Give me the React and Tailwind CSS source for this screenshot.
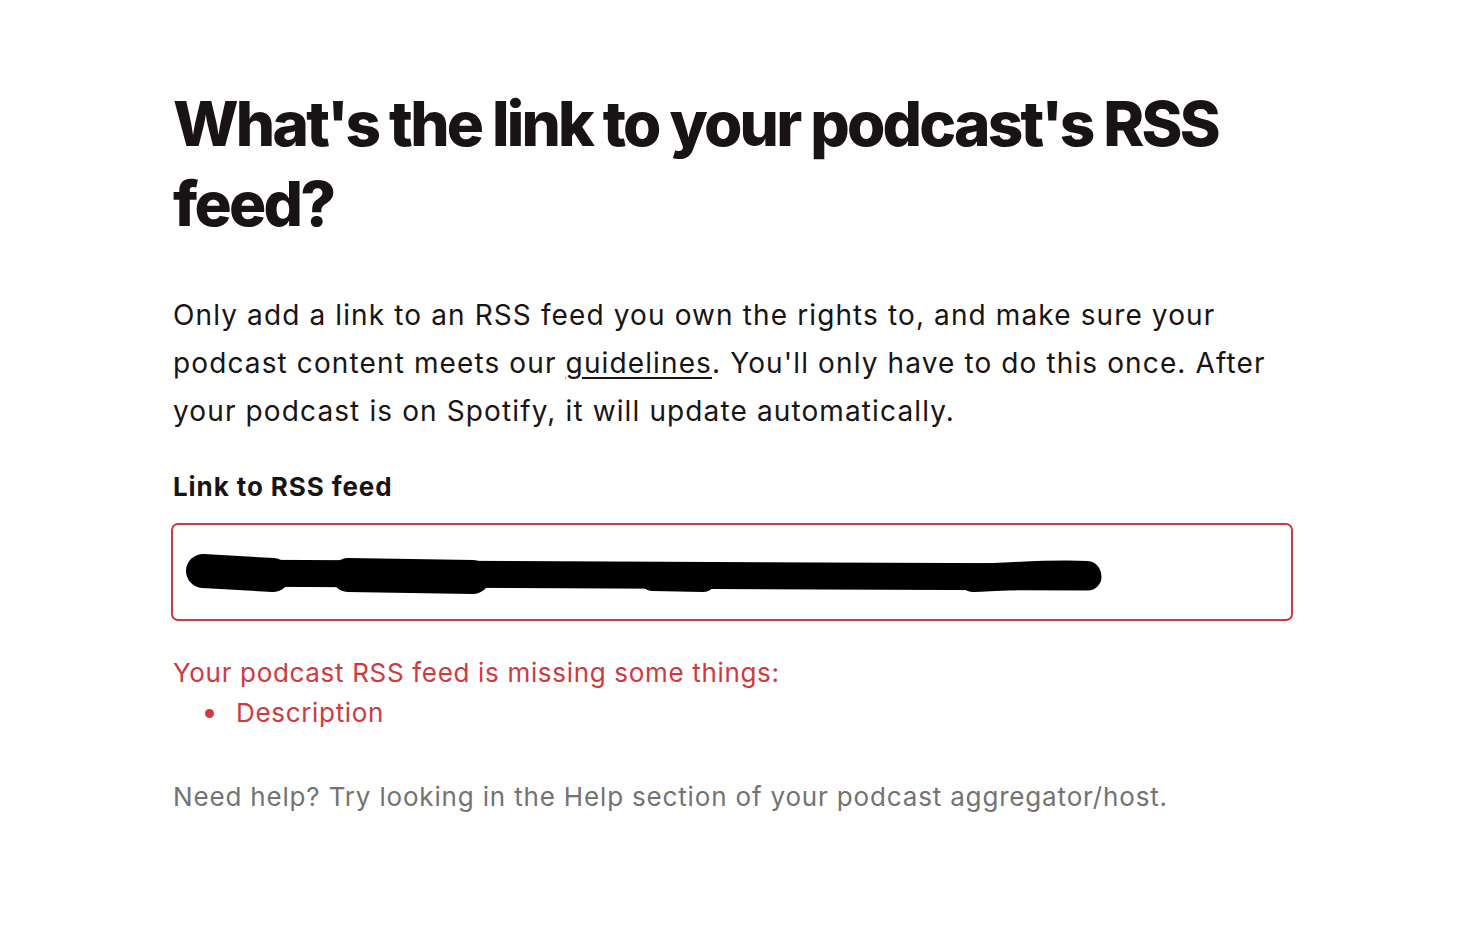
import React from "react";

function Redaction() {
  return (
    <svg
      className="absolute left-0 top-0"
      width="1122"
      height="97"
      viewBox="0 0 1122 97"
      fill="none"
    >
      <g stroke="#000" strokeLinecap="round" strokeLinejoin="round">
        <path d="M30 48 C 200 49, 600 51, 915 52" strokeWidth="27" />
        <path d="M30 46 L 100 50" strokeWidth="34" />
        <path d="M175 50 L 300 52" strokeWidth="34" />
        <path d="M480 52 L 530 53" strokeWidth="28" />
        <path d="M800 53 C 850 51, 880 48, 914 50" strokeWidth="28" />
      </g>
    </svg>
  );
}

function App() {
  return (
    <div className="min-h-screen bg-white font-[Inter,sans-serif] text-[#191414]">
      <div className="mx-auto w-[1122px] pt-[84px]">
        <h1 className="pl-[2px] text-[62px] font-extrabold leading-[80px] tracking-[-0.045em] text-[#191414]">
          What's the link to your podcast's RSS feed?
        </h1>
        <p className="mt-[47px] pl-[2px] text-[28px] leading-[48px] tracking-[0.04em] text-[#191414]">
          Only add a link to an RSS feed you own the rights to, and make sure
          your podcast content meets our{" "}
          <a href="#" className="underline underline-offset-4">
            guidelines
          </a>
          . You'll only have to do this once. After your podcast is on Spotify,
          it will update automatically.
        </p>
        <label className="mt-[34px] block pl-[2px] text-[26px] font-bold leading-[36px] tracking-[0.035em]">
          Link to RSS feed
        </label>
        <div className="relative mt-[18px] h-[98px] w-full rounded-[7px] border-2 border-[#d0393e]">
          <Redaction />
        </div>
        <div className="mt-[32px] pl-[2px] text-[26px] leading-[40px] tracking-[0.026em] text-[#d0393e]">
          <p>Your podcast RSS feed is missing some things:</p>
          <ul>
            <li className="flex items-center">
              <span className="ml-[32px] mr-[22px] h-[9px] w-[9px] rounded-full bg-[#d0393e]"></span>
              Description
            </li>
          </ul>
        </div>
        <p className="mt-[44px] pl-[2px] text-[26px] leading-[40px] tracking-[0.032em] text-[#737373]">
          Need help? Try looking in the Help section of your podcast
          aggregator/host.
        </p>
      </div>
    </div>
  );
}

export default App;
